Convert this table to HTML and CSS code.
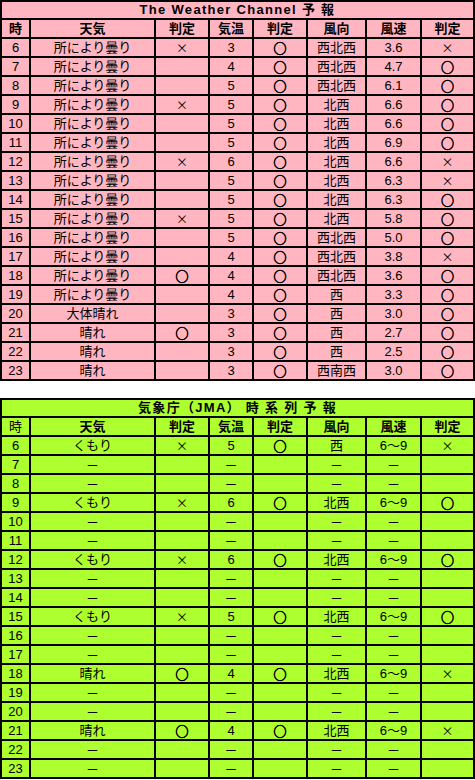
FILE: index.html
```html
<!DOCTYPE html>
<html lang="ja">
<head>
<meta charset="utf-8">
<link rel="stylesheet" href="styles.css">
</head>
<body>
<div class="sheet pink">
  <div class="title">The Weather Channel 予 報</div>
  <div class="hd">時</div><div class="hd">天気</div><div class="hd">判定</div><div class="hd">気温</div><div class="hd">判定</div><div class="hd">風向</div><div class="hd">風速</div><div class="hd">判定</div>
  <div>6</div><div>所により曇り</div><div class="x">×</div><div>3</div><div class="o">○</div><div>西北西</div><div>3.6</div><div class="x">×</div>
  <div>7</div><div>所により曇り</div><div></div><div>4</div><div class="o">○</div><div>西北西</div><div>4.7</div><div class="o">○</div>
  <div>8</div><div>所により曇り</div><div></div><div>5</div><div class="o">○</div><div>西北西</div><div>6.1</div><div class="o">○</div>
  <div>9</div><div>所により曇り</div><div class="x">×</div><div>5</div><div class="o">○</div><div>北西</div><div>6.6</div><div class="o">○</div>
  <div>10</div><div>所により曇り</div><div></div><div>5</div><div class="o">○</div><div>北西</div><div>6.6</div><div class="o">○</div>
  <div>11</div><div>所により曇り</div><div></div><div>5</div><div class="o">○</div><div>北西</div><div>6.9</div><div class="o">○</div>
  <div>12</div><div>所により曇り</div><div class="x">×</div><div>6</div><div class="o">○</div><div>北西</div><div>6.6</div><div class="x">×</div>
  <div>13</div><div>所により曇り</div><div></div><div>5</div><div class="o">○</div><div>北西</div><div>6.3</div><div class="x">×</div>
  <div>14</div><div>所により曇り</div><div></div><div>5</div><div class="o">○</div><div>北西</div><div>6.3</div><div class="o">○</div>
  <div>15</div><div>所により曇り</div><div class="x">×</div><div>5</div><div class="o">○</div><div>北西</div><div>5.8</div><div class="o">○</div>
  <div>16</div><div>所により曇り</div><div></div><div>5</div><div class="o">○</div><div>西北西</div><div>5.0</div><div class="o">○</div>
  <div>17</div><div>所により曇り</div><div></div><div>4</div><div class="o">○</div><div>西北西</div><div>3.8</div><div class="x">×</div>
  <div>18</div><div>所により曇り</div><div class="o">○</div><div>4</div><div class="o">○</div><div>西北西</div><div>3.6</div><div class="o">○</div>
  <div>19</div><div>所により曇り</div><div></div><div>4</div><div class="o">○</div><div>西</div><div>3.3</div><div class="o">○</div>
  <div>20</div><div>大体晴れ</div><div></div><div>3</div><div class="o">○</div><div>西</div><div>3.0</div><div class="o">○</div>
  <div>21</div><div>晴れ</div><div class="o">○</div><div>3</div><div class="o">○</div><div>西</div><div>2.7</div><div class="o">○</div>
  <div>22</div><div>晴れ</div><div></div><div>3</div><div class="o">○</div><div>西</div><div>2.5</div><div class="o">○</div>
  <div>23</div><div>晴れ</div><div></div><div>3</div><div class="o">○</div><div>西南西</div><div>3.0</div><div class="o">○</div>
</div>
<div class="sheet green">
  <div class="title">気象庁（JMA） 時 系 列 予 報</div>
  <div>時</div><div class="hd">天気</div><div class="hd">判定</div><div class="hd">気温</div><div class="hd">判定</div><div class="hd">風向</div><div class="hd">風速</div><div class="hd">判定</div>
  <div>6</div><div>くもり</div><div class="x">×</div><div>5</div><div class="o">○</div><div>西</div><div>6〜9</div><div class="x">×</div>
  <div>7</div><div class="d">－</div><div></div><div class="d">－</div><div></div><div class="d">－</div><div class="d">－</div><div></div>
  <div>8</div><div class="d">－</div><div></div><div class="d">－</div><div></div><div class="d">－</div><div class="d">－</div><div></div>
  <div>9</div><div>くもり</div><div class="x">×</div><div>6</div><div class="o">○</div><div>北西</div><div>6〜9</div><div class="o">○</div>
  <div>10</div><div class="d">－</div><div></div><div class="d">－</div><div></div><div class="d">－</div><div class="d">－</div><div></div>
  <div>11</div><div class="d">－</div><div></div><div class="d">－</div><div></div><div class="d">－</div><div class="d">－</div><div></div>
  <div>12</div><div>くもり</div><div class="x">×</div><div>6</div><div class="o">○</div><div>北西</div><div>6〜9</div><div class="o">○</div>
  <div>13</div><div class="d">－</div><div></div><div class="d">－</div><div></div><div class="d">－</div><div class="d">－</div><div></div>
  <div>14</div><div class="d">－</div><div></div><div class="d">－</div><div></div><div class="d">－</div><div class="d">－</div><div></div>
  <div>15</div><div>くもり</div><div class="x">×</div><div>5</div><div class="o">○</div><div>北西</div><div>6〜9</div><div class="o">○</div>
  <div>16</div><div class="d">－</div><div></div><div class="d">－</div><div></div><div class="d">－</div><div class="d">－</div><div></div>
  <div>17</div><div class="d">－</div><div></div><div class="d">－</div><div></div><div class="d">－</div><div class="d">－</div><div></div>
  <div>18</div><div>晴れ</div><div class="o">○</div><div>4</div><div class="o">○</div><div>北西</div><div>6〜9</div><div class="x">×</div>
  <div>19</div><div class="d">－</div><div></div><div class="d">－</div><div></div><div class="d">－</div><div class="d">－</div><div></div>
  <div>20</div><div class="d">－</div><div></div><div class="d">－</div><div></div><div class="d">－</div><div class="d">－</div><div></div>
  <div>21</div><div>晴れ</div><div class="o">○</div><div>4</div><div class="o">○</div><div>北西</div><div>6〜9</div><div class="x">×</div>
  <div>22</div><div class="d">－</div><div></div><div class="d">－</div><div></div><div class="d">－</div><div class="d">－</div><div></div>
  <div>23</div><div class="d">－</div><div></div><div class="d">－</div><div></div><div class="d">－</div><div class="d">－</div><div></div>
</div>
</body>
</html>
```

FILE: styles.css
```css
html, body {
  margin: 0;
  padding: 0;
  background: #ffffff;
}
body {
  font-family: "Liberation Sans", "Noto Sans CJK JP", sans-serif;
  font-size: 13px;
  color: #000;
}
.sheet {
  display: grid;
  grid-template-columns: 27px 123px 52px 42px 52px 57px 53px 51px;
  grid-template-rows: 16px;
  grid-auto-rows: 17px;
  gap: 2px;
  padding: 2px;
  width: 475px;
  box-sizing: border-box;
  background: #000;
}
.sheet > div {
  text-align: center;
  line-height: 17px;
  white-space: nowrap;
}
.pink > div { background: #ffb6c1; }
.green > div { background: #adff2f; }
.green { margin-top: 17px; }
.sheet > .title {
  grid-column: 1 / -1;
  height: 16px;
  line-height: 16px;
  font-weight: bold;
  letter-spacing: 1.3px;
}
.hd { font-weight: bold; }
.sheet > .o {
  font-family: "Noto Sans CJK JP", sans-serif;
  font-size: 13px;
  line-height: 17px;
  -webkit-text-stroke: 0.7px #000;
}
.sheet > .x {
  font-family: "Noto Sans CJK JP", sans-serif;
  font-size: 12px;
}
.d { font-family: "Noto Sans CJK JP", sans-serif; }
```
